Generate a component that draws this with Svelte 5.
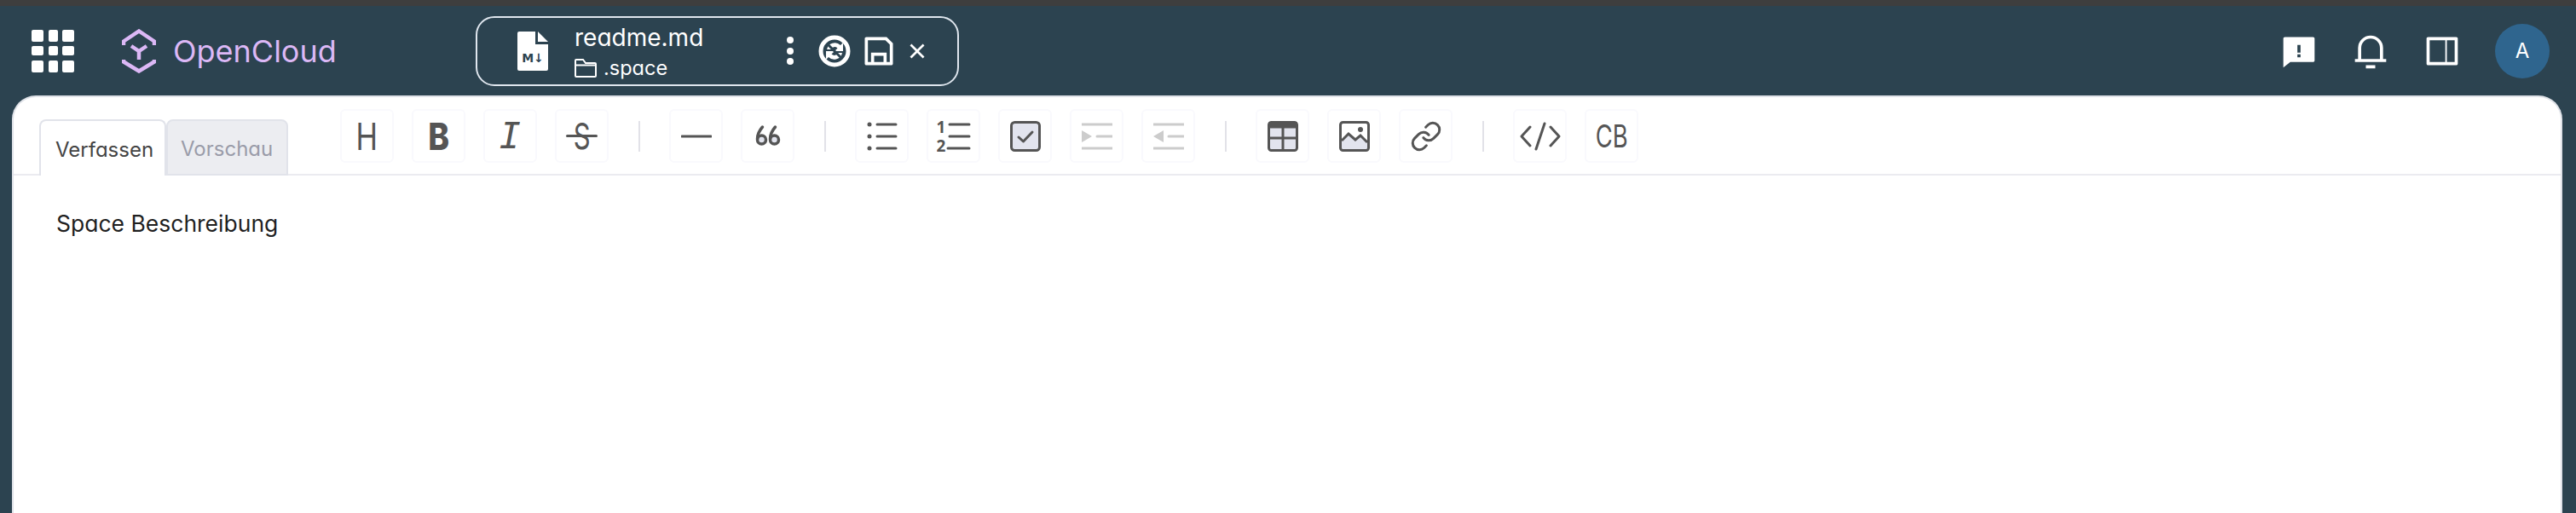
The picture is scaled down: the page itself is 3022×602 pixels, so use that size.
<script>
    const groups = [
        ['h', 'b', 'i', 's'],
        ['hr', 'quote'],
        ['ul', 'ol', 'task', 'indent', 'outdent'],
        ['table', 'image', 'link'],
        ['code', 'cb']
    ];
</script>

<style>
    :global(*) { box-sizing: border-box; }
    :global(body) { margin: 0; background: #2c4350; font-family: Inter, "Liberation Sans", sans-serif; font-feature-settings: "cv11" 1; overflow: hidden; }

    .app { height: 602px; display: flex; flex-direction: column; background: #2c4350; overflow: hidden; }
    .strip { height: 7px; background: #3e3e3e; flex: none; }

    .topbar { height: 105px; flex: none; display: flex; align-items: center; padding: 0 31px 0 37px; }
    .grid { width: 50px; height: 50px; display: grid; grid-template-columns: 14px 11px 14px; justify-content: space-between; align-content: space-between; grid-template-rows: 14px 11px 14px; }
    .grid span { background: #fff; border-radius: 2px; }
    .logo { display: flex; align-items: center; gap: 20px; margin-left: 56px; width: 415px; }
    .logo span { font-size: 36px; font-weight: 400; color: #dcb8f6; }

    .pill { width: 567px; height: 82px; border: 2px solid #dfe6ee; border-radius: 22px; display: flex; align-items: center; padding-left: 47px; color: #fff; }
    .meta { margin-left: 31px; width: 248px; display: flex; flex-direction: column; padding-top: 3px; }
    .name { font-size: 28px; line-height: 36px; font-weight: 400; }
    .path { display: flex; align-items: center; gap: 8px; font-size: 23.5px; line-height: 34px; font-weight: 400; margin-top: 1px; }
    .pill-actions { display: flex; align-items: center; }
    .dots { width: 10px; height: 33px; display: flex; flex-direction: column; justify-content: space-between; align-items: center; margin-right: 28px; }
    .dots i { width: 8px; height: 8px; background: #fff; border-radius: 50%; }
    .save { margin-left: 11px; }
    .close { margin-left: 7px; }

    .right { margin-left: auto; display: flex; align-items: center; gap: 40px; }
    .avatar { width: 64px; height: 64px; border-radius: 50%; background: #2f658e; color: #fff; display: flex; align-items: center; justify-content: center; font-size: 24px; }

    .panel { flex: 1; margin: 0 16px 0 14px; background: #fff; border: 2px solid #dfe2e8; border-bottom: 0; border-radius: 28px 28px 0 0; display: flex; flex-direction: column; }
    .bar { height: 92px; flex: none; display: flex; border-bottom: 2px solid #ebebf0; padding-left: 30px; }
    .tabs { display: flex; align-items: flex-end; margin-bottom: -2px; }
    .tab { height: 66px; border: 2px solid #e1e3ea; border-bottom: 0; border-radius: 8px 8px 0 0; font-size: 24px; font-weight: 400; display: flex; align-items: center; padding-top: 3px; }
    .tab.on { width: 149px; padding-left: 17px; background: #fff; color: #444; }
    .tab.off { width: 143px; padding-left: 15px; background: #ecedf1; color: #9a9ca9; border-bottom: 2px solid #e1e3ea; }

    .tools { display: flex; align-items: flex-start; gap: 21px; margin-left: 61px; padding-top: 14px; }
    .tool { width: 63px; height: 63px; border: 2px solid #f9f9fd; border-radius: 6px; background: #fff; padding: 0; display: flex; align-items: center; justify-content: center; color: #555; font-family: inherit; position: relative; }
    .sep { width: 2px; height: 36px; background: #e2e2e8; margin: 14px 13.5px 0; }
    .tool span { display: block; line-height: 1; }
    .t-h span { font-size: 44px; font-weight: 400; transform: scaleX(.78); }
    .t-b span { font-size: 44px; font-weight: 800; transform: scaleX(.85); }
    .t-i span { font-family: "DejaVu Sans Mono", monospace; font-style: italic; font-size: 42px; }
    .t-s span { font-size: 43px; font-weight: 400; transform: scaleX(.72); }
    .t-s::after { content: ''; position: absolute; left: 11px; right: 11px; top: 28px; height: 3px; background: #555; border-radius: 2px; }
    .t-cb span { font-size: 37px; font-weight: 400; transform: scaleX(.74); }

    .content { padding: 36px 50px; font-size: 26.5px; line-height: 40px; font-weight: 400; color: #1f1f1f; }
</style>

<div class="app">
    <div class="strip"></div>
    <header class="topbar">
        <div class="grid">
            {#each Array(9) as _}<span></span>{/each}
        </div>
        <div class="logo">
            <svg width="40" height="52" viewBox="0 0 40 52" fill="none" stroke="#dcb8f6" stroke-width="4.5" stroke-linejoin="miter">
                <path d="M2 19V14.5L20 2.5L38 14.5V19"/>
                <path d="M2 36V38.5L20 49.5L38 38.5V36"/>
                <path d="M11 20L20 26L29 20M20 26V36"/>
            </svg>
            <span>OpenCloud</span>
        </div>
        <div class="pill">
            <svg width="36" height="46" viewBox="0 0 36 46">
                <path fill="#fff" d="M2 0H21V15H36V44a2 2 0 0 1-2 2H2a2 2 0 0 1-2-2V2a2 2 0 0 1 2-2ZM24 0L36 12H24Z"/>
                <text x="18" y="36" text-anchor="middle" font-size="14" font-weight="700" fill="#2c4350" font-family="DejaVu Sans">M↓</text>
            </svg>
            <div class="meta">
                <div class="name">readme.md</div>
                <div class="path">
                    <svg width="26" height="22" viewBox="0 0 26 22" fill="none" stroke="#fff" stroke-width="2"><path d="M1 2a1 1 0 0 1 1-1h8l3 4h11a1 1 0 0 1 1 1v14a1 1 0 0 1-1 1H2a1 1 0 0 1-1-1ZM1 7.500H25"/></svg>
                    <span>.space</span>
                </div>
            </div>
            <div class="pill-actions">
                <div class="dots"><i></i><i></i><i></i></div>
                <svg width="38" height="38" viewBox="0 0 38 38">
                    <g fill="#fff">
                        <path d="M10 17a9.500 9.500 0 0 1 16-5l3-3v10h-10l3.500-3.500a5 5 0 0 0-8 1.500Z"/>
                        <path d="M28 21a9.500 9.500 0 0 1-16 5l-3 3v-10h10l-3.500 3.500a5 5 0 0 0 8-1.500Z"/>
                    </g>
                    <path d="M8 8L30 30" stroke="#2c4350" stroke-width="3"/>
                    <circle cx="19" cy="19" r="16" fill="none" stroke="#fff" stroke-width="5"/>
                </svg>
                <svg class="save" width="44" height="44" viewBox="0 0 24 24" fill="#fff"><path d="M7 19V13H17V19H19V7.82843L16.1716 5H5V19H7ZM4 3H17L21 7V20C21 20.5523 20.5523 21 20 21H4C3.44772 21 3 20.5523 3 20V4C3 3.44772 3.44772 3 4 3ZM9 15V19H15V15H9Z"/></svg>
                <svg class="close" width="32" height="32" viewBox="0 0 24 24" fill="#fff"><path d="M12 10.5858L16.9497 5.63604L18.364 7.05025L13.4142 12L18.364 16.9497L16.9497 18.364L12 13.4142L7.05025 18.364L5.63604 16.9497L10.5858 12L5.63604 7.05025L7.05025 5.63604L12 10.5858Z"/></svg>
            </div>
        </div>
        <div class="right">
            <svg width="44" height="44" viewBox="0 0 24 24" fill="#fff"><path d="M6.45455 19L2 22.5V4C2 3.44772 2.44772 3 3 3H21C21.5523 3 22 3.44772 22 4V18C22 18.5523 21.5523 19 21 19H6.45455ZM11 14V16H13V14H11ZM11 8V13H13V8H11Z"/></svg>
            <svg width="44" height="44" viewBox="0 0 24 24" fill="#fff"><path d="M20 17h2v2H2v-2h2v-7a8 8 0 1 1 16 0v7zm-2 0v-7a6 6 0 1 0-12 0v7h12zm-9 4h6v2H9v-2z"/></svg>
            <svg width="44" height="44" viewBox="0 0 24 24" fill="#fff"><path d="M3 3H21C21.5523 3 22 3.44772 22 4V20C22 20.5523 21.5523 21 21 21H3C2.44772 21 2 20.5523 2 20V4C2 3.44772 2.44772 3 3 3ZM15 5V19H20V5H15ZM4 5V19H14V5H4Z"/></svg>
            <div class="avatar">A</div>
        </div>
    </header>

    <section class="panel">
        <div class="bar">
            <div class="tabs">
                <div class="tab on">Verfassen</div>
                <div class="tab off">Vorschau</div>
            </div>
            <div class="tools">
                {#each groups as group, g}
                    {#if g > 0}<div class="sep"></div>{/if}
                    {#each group as t}
                        <button class="tool t-{t}">
                            {#if t === 'h'}<span>H</span>
                            {:else if t === 'b'}<span>B</span>
                            {:else if t === 'i'}<span>I</span>
                            {:else if t === 's'}<span>S</span>
                            {:else if t === 'cb'}<span>CB</span>
                            {:else if t === 'hr'}
                                <svg width="36" height="36" viewBox="0 0 36 36"><path d="M1 18H35" stroke="#555" stroke-width="3" stroke-linecap="round"/></svg>
                            {:else if t === 'quote'}
                                <svg width="30" height="30" viewBox="0 0 30 30">
                                    <circle cx="7.500" cy="19" r="5" fill="#e2e4ee" stroke="#555" stroke-width="3.500"/>
                                    <path d="M2.500 18C2.500 13 5 8 8.500 4" fill="none" stroke="#555" stroke-width="3.500" stroke-linecap="round"/>
                                    <circle cx="22.500" cy="19" r="5" fill="#e2e4ee" stroke="#555" stroke-width="3.500"/>
                                    <path d="M17.500 18C17.500 13 20 8 23.500 4" fill="none" stroke="#555" stroke-width="3.500" stroke-linecap="round"/>
                                </svg>
                            {:else if t === 'ul'}
                                <svg width="36" height="36" viewBox="0 0 36 36" stroke="#555" stroke-width="3" stroke-linecap="round">
                                    <path d="M12 4H34M12 18H34M12 32H34"/>
                                    <circle cx="3" cy="4" r="2.500" fill="#555" stroke="none"/><circle cx="3" cy="18" r="2.500" fill="#555" stroke="none"/><circle cx="3" cy="32" r="2.500" fill="#555" stroke="none"/>
                                </svg>
                            {:else if t === 'ol'}
                                <svg width="40" height="38" viewBox="0 0 40 38">
                                    <path d="M15 5H38M15 19H38M13 33H38" stroke="#555" stroke-width="3" stroke-linecap="round"/>
                                    <text x="5" y="15" text-anchor="middle" font-size="19" font-weight="700" fill="#555" font-family="Noto Sans">1</text>
                                    <text x="5" y="37" text-anchor="middle" font-size="19" font-weight="700" fill="#555" font-family="Noto Sans">2</text>
                                </svg>
                            {:else if t === 'task'}
                                <svg width="36" height="36" viewBox="0 0 36 36">
                                    <rect x="1.500" y="1.500" width="33" height="33" rx="4" fill="#e2e4ee" stroke="#555" stroke-width="3"/>
                                    <path d="M10 19L15.500 24L26 13" fill="none" stroke="#555" stroke-width="3" stroke-linecap="round" stroke-linejoin="round"/>
                                </svg>
                            {:else if t === 'indent' || t === 'outdent'}
                                <svg width="36" height="36" viewBox="0 0 36 36">
                                    <path d="M0 4H36M18 18H36M0 32H36" stroke="#ccc" stroke-width="3" stroke-linecap="round"/>
                                    {#if t === 'indent'}<path d="M0 11L12 18L0 25Z" fill="#ccc"/>{:else}<path d="M12 11L0 18L12 25Z" fill="#ccc"/>{/if}
                                </svg>
                            {:else if t === 'table'}
                                <svg width="36" height="36" viewBox="0 0 36 36">
                                    <rect x="1.500" y="1.500" width="33" height="33" rx="3" fill="#e2e4ee" stroke="#555" stroke-width="3"/>
                                    <path d="M1 5H35" stroke="#555" stroke-width="7"/>
                                    <path d="M2 20H34M18 8V34" stroke="#555" stroke-width="3"/>
                                </svg>
                            {:else if t === 'image'}
                                <svg width="36" height="36" viewBox="0 0 36 36">
                                    <path d="M3 23L11 15L19 22L25 17L33 25V33H3Z" fill="#e2e4ee"/>
                                    <rect x="1.500" y="1.500" width="33" height="33" rx="3" fill="none" stroke="#555" stroke-width="3"/>
                                    <path d="M3 23L11 15L19 22L25 17L33 25" fill="none" stroke="#555" stroke-width="3"/>
                                    <circle cx="25" cy="10" r="3" fill="#555"/>
                                </svg>
                            {:else if t === 'link'}
                                <svg width="38" height="38" viewBox="0 0 24 24" fill="none" stroke="#555" stroke-width="1.900" stroke-linecap="round" stroke-linejoin="round">
                                    <path d="M10 13a5 5 0 0 0 7.540.540l3-3a5 5 0 0 0-7.070-7.070l-1.720 1.710"/>
                                    <path d="M14 11a5 5 0 0 0-7.540-.540l-3 3a5 5 0 0 0 7.070 7.070l1.710-1.710"/>
                                </svg>
                            {:else if t === 'code'}
                                <svg width="48" height="34" viewBox="0 0 48 34" fill="none" stroke="#555" stroke-width="3" stroke-linecap="round" stroke-linejoin="round">
                                    <path d="M12 6L2 17L12 28M36 6L46 17L36 28M29 2L19 32"/>
                                </svg>
                            {/if}
                        </button>
                    {/each}
                {/each}
            </div>
        </div>
        <div class="content">Space Beschreibung</div>
    </section>
</div>
